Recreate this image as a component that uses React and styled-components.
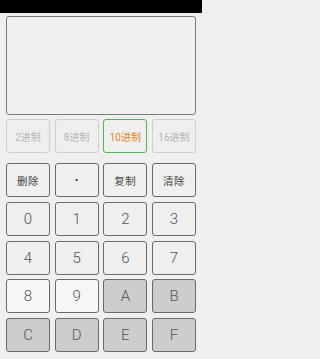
import React, { useState } from 'react';
import styled, { createGlobalStyle } from 'styled-components';

const GlobalStyle = createGlobalStyle`
  html, body {
    margin: 0;
    padding: 0;
    background: #efefef;
    font-family: Roboto, "Noto Sans CJK SC", sans-serif;
  }
`;

const Screen = styled.div`
  width: 202px;
  height: 359px;
  display: flex;
  flex-direction: column;
  background: #efefef;
  overflow: hidden;
`;

const StatusBar = styled.div`
  height: 13px;
  background: #000;
  flex-shrink: 0;
`;

const Body = styled.div`
  padding: 3px 6px 0;
  display: flex;
  flex-direction: column;
`;

const Display = styled.div`
  height: 99px;
  border: 1px solid #7a7a7a;
  border-radius: 3px;
  background: #f0f0f0;
  display: flex;
  align-items: flex-end;
  justify-content: flex-end;
  padding: 6px;
  box-sizing: border-box;
  font-size: 20px;
  color: #333;
`;

const Grid = styled.div`
  display: grid;
  grid-template-columns: repeat(4, 1fr);
  column-gap: 4.67px;
  row-gap: 4.5px;
  margin-top: ${props => props.top}px;
`;

const BaseButton = styled.button`
  height: 34px;
  padding: 0;
  border-radius: 3px;
  border: 1px solid ${props => (props.active ? '#55b05a' : '#cfcfcf')};
  background: #efefef;
  color: ${props => (props.active ? '#e0861e' : '#b4b4b4')};
  font-family: Roboto, "Noto Sans CJK SC", sans-serif;
  font-size: 10px;
  cursor: pointer;
`;

const OpButton = styled.button`
  height: 34px;
  padding: 0;
  border-radius: 3px;
  border: 1px solid #6a6a6a;
  background: #efefef;
  color: #444;
  font-family: Roboto, "Noto Sans CJK SC", sans-serif;
  font-size: 10.5px;
  letter-spacing: 0.5px;
  cursor: pointer;
`;

const KeyButton = styled.button`
  height: 34px;
  padding: 0;
  border-radius: 3px;
  border: 1px solid #6a6a6a;
  background: ${props => {
    switch (props.tone) {
      case 'light': return '#f6f6f6';
      case 'dark': return '#cdcdcd';
      default: return '#efefef';
    }
  }};
  color: #555;
  font-family: Roboto, "Liberation Sans", sans-serif;
  font-weight: 300;
  font-size: 15px;
  cursor: pointer;
`;

const bases = [
  { id: 2, label: '2进制' },
  { id: 8, label: '8进制' },
  { id: 10, label: '10进制' },
  { id: 16, label: '16进制' },
];

const ops = ['删除', '•', '复制', '清除'];

const keys = ['0', '1', '2', '3', '4', '5', '6', '7', '8', '9', 'A', 'B', 'C', 'D', 'E', 'F'];

const getTone = (key) => {
  if (key === '8' || key === '9') return 'light';
  if (/[A-F]/.test(key)) return 'dark';
  return 'normal';
};

const App = () => {
  const [base, setBase] = useState(10);
  const [value, setValue] = useState('');

  const handleOp = (op) => {
    if (op === '删除') setValue(v => v.slice(0, -1));
    if (op === '清除') setValue('');
    if (op === '•') setValue(v => (v.includes('.') ? v : v + '.'));
  };

  return (
    <>
      <GlobalStyle />
      <Screen>
        <StatusBar />
        <Body>
          <Display>{value}</Display>
          <Grid top={4}>
            {bases.map(b => (
              <BaseButton key={b.id} active={b.id === base} onClick={() => setBase(b.id)}>
                {b.label}
              </BaseButton>
            ))}
          </Grid>
          <Grid top={10}>
            {ops.map(op => (
              <OpButton key={op} onClick={() => handleOp(op)}>{op}</OpButton>
            ))}
          </Grid>
          <Grid top={5}>
            {keys.map(k => (
              <KeyButton key={k} tone={getTone(k)} onClick={() => setValue(v => v + k)}>
                {k}
              </KeyButton>
            ))}
          </Grid>
        </Body>
      </Screen>
    </>
  );
};

export default App;
